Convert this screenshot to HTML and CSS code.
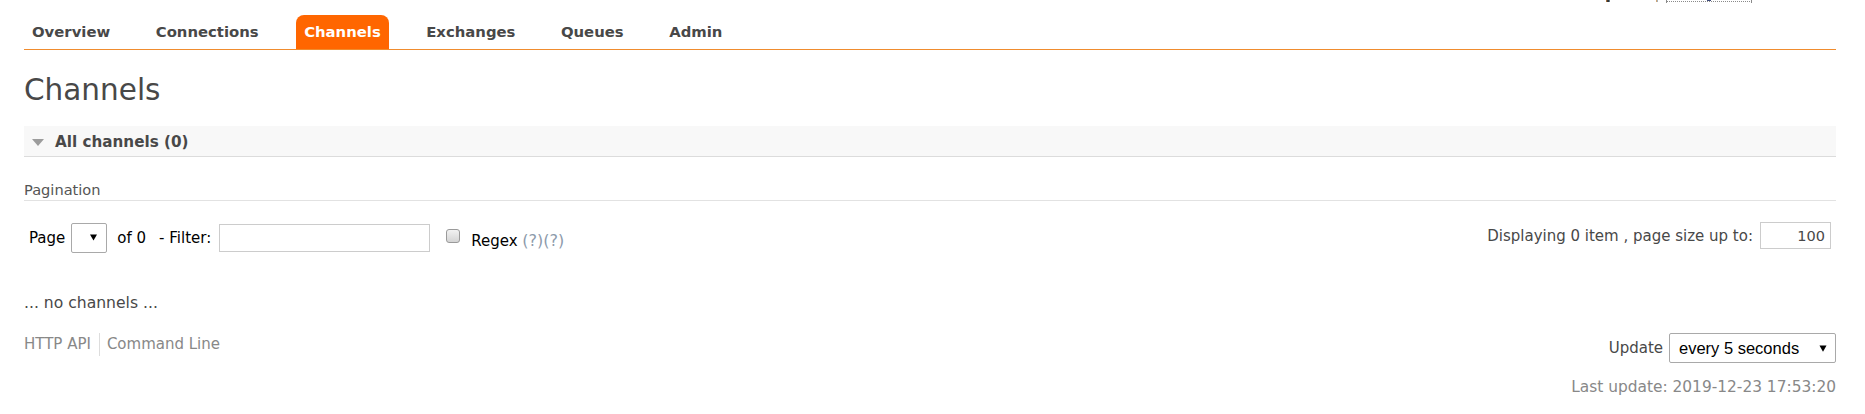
FILE: index.html
```html
<!DOCTYPE html>
<html lang="en">
<head>
<meta charset="utf-8">
<title>RabbitMQ Management - Channels</title>
<link rel="stylesheet" href="styles.css">
</head>
<body>
<div class="page">
  <div class="topcut">
    <span class="cut-a"></span>
    <span class="cut-b"></span>
    <span class="cut-box"><span class="cut-c"></span></span>
  </div>

  <ul class="tabs">
    <li><a href="#">Overview</a></li>
    <li><a href="#">Connections</a></li>
    <li><a href="#" class="active">Channels</a></li>
    <li><a href="#">Exchanges</a></li>
    <li><a href="#">Queues</a></li>
    <li><a href="#">Admin</a></li>
  </ul>

  <h1 class="title">Channels</h1>

  <div class="section">
    <h2 class="section-head"><span class="tri"></span>All channels (0)</h2>
    <div class="section-body">
      <h3 class="subhead">Pagination</h3>
      <div class="pager">
        <div class="pager-left">
          <span class="lbl">Page</span>
          <span class="select-wrap pg-wrap">
            <select class="pg-select"><option></option></select>
            <svg class="arrow pg-arrow" width="7" height="7" viewBox="0 0 7 7"><path d="M0 0.5H7L3.5 6.5Z" fill="#000"/></svg>
          </span>
          <span class="lbl of">of 0</span>
          <span class="lbl filter-lbl">- Filter:</span>
          <input class="filter" type="text">
          <input class="check" type="checkbox">
          <span class="lbl regex">Regex <span class="help">(?)(?)</span></span>
        </div>
        <div class="pager-right">
          <span>Displaying 0 item , page size up to:</span>
          <input class="size" type="text" value="100">
        </div>
      </div>
      <p class="empty">... no channels ...</p>
    </div>
  </div>

  <div class="footer">
    <div class="links">
      <a href="#">HTTP API</a>
      <a href="#" class="sep">Command Line</a>
    </div>
    <div class="update">
      <span>Update</span>
      <span class="select-wrap up-wrap">
        <select class="up-select"><option>every 5 seconds</option></select>
        <svg class="arrow up-arrow" width="8" height="7" viewBox="0 0 8 7"><path d="M0.5 0.5H7.5L4 6.8Z" fill="#000"/></svg>
      </span>
    </div>
  </div>
  <p class="last">Last update: 2019-12-23 17:53:20</p>
</div>
</body>
</html>
```
FILE: styles.css
```css
html, body {
  margin: 0;
  padding: 0;
  background: #fff;
}
body {
  font-family: "DejaVu Sans", Verdana, sans-serif;
  font-size: 15px;
  color: #484848;
}
.page {
  padding: 0 29px 0 24px;
}

/* cut-off top row */
.topcut {
  display: flex;
  justify-content: flex-end;
  height: 2px;
  margin-right: 84px;
}
.cut-a {
  width: 4px;
  height: 2px;
  background: linear-gradient(90deg, #d88a3a, #333 40%, #333 70%, #7fb0d8);
  margin-right: 46px;
}
.cut-b {
  width: 2px;
  height: 2px;
  background: linear-gradient(90deg, #e9a050, #8cb5dd);
  margin-right: 8px;
}
.cut-box {
  box-sizing: border-box;
  width: 86px;
  height: 2px;
  border: 1px dotted #8a8a8a;
  border-top: none;
  display: flex;
  justify-content: center;
}
.cut-c {
  width: 4px;
  height: 1px;
  background: #3d4a7a;
}

/* tabs */
.tabs {
  list-style: none;
  margin: 13px 0 0;
  padding: 0;
  display: flex;
  border-bottom: 1px solid #f08c2e;
}
.tabs li {
  margin-right: 29.5px;
}
.tabs a {
  display: block;
  padding: 0 8px;
  line-height: 34px;
  font-size: 14.85px;
  font-weight: bold;
  color: #484848;
  text-decoration: none;
}
.tabs a.active {
  background: #ff6600;
  color: #fff;
  border-radius: 8px 8px 0 0;
}

/* title */
.title {
  margin: 22px 0 0;
  font-size: 29.5px;
  font-weight: normal;
  line-height: 36px;
  color: #484848;
}

/* section */
.section-head {
  margin: 18px 0 0;
  padding: 2px 0 0 8px;
  display: flex;
  align-items: center;
  background: #f8f8f8;
  border-bottom: 1px solid #dcdcdc;
  line-height: 28px;
  font-size: 15.2px;
  font-weight: bold;
  color: #484848;
}
.tri {
  width: 0;
  height: 0;
  border-left: 6px solid transparent;
  border-right: 6px solid transparent;
  border-top: 7px solid #9c9c9c;
  margin-right: 11px;
}
.subhead {
  margin: 23px 0 0;
  font-size: 14.6px;
  font-weight: normal;
  line-height: 20px;
  color: #555;
  border-bottom: 1px solid #e2e2e2;
}

/* pager */
.pager {
  margin-top: 22px;
  display: flex;
  justify-content: space-between;
  align-items: flex-start;
}
.pager-left {
  display: flex;
  align-items: center;
  height: 30px;
  padding-left: 5px;
  font-size: 15px;
  color: #000;
}
.select-wrap {
  position: relative;
  display: block;
}
.arrow {
  position: absolute;
  display: block;
}
.pg-wrap {
  margin-left: 6px;
}
.pg-select {
  -webkit-appearance: none;
  appearance: none;
  display: block;
  box-sizing: border-box;
  width: 36px;
  height: 30px;
  margin: 0;
  border: 1px solid #a9a9a9;
  border-radius: 2px;
  background: #fff;
}
.pg-arrow {
  left: 19px;
  top: 11px;
}
.of {
  margin-left: 10px;
}
.filter-lbl {
  margin-left: 13px;
}
.filter {
  box-sizing: border-box;
  width: 211px;
  height: 28px;
  margin: 0 0 0 8px;
  border: 1px solid #cccccc;
  border-radius: 0;
  padding: 0 4px;
  outline: none;
}
.check {
  -webkit-appearance: none;
  appearance: none;
  box-sizing: border-box;
  width: 14px;
  height: 14px;
  margin: 0 0 4px 16px;
  border: 1px solid #9a9a9a;
  border-radius: 3px;
  background: linear-gradient(#f2f2f2, #d4d4d4);
}
.regex {
  margin: 4px 0 0 11px;
}
.help {
  color: #8d9aab;
  font-size: 16px;
}
.pager-right {
  display: flex;
  align-items: center;
  margin: -1px 5px 0 0;
  font-size: 15px;
  color: #484848;
}
.size {
  box-sizing: border-box;
  width: 71px;
  height: 27px;
  margin: 0 0 0 7px;
  border: 1px solid #cccccc;
  border-radius: 0;
  padding: 0 5px 0 0;
  text-align: right;
  font-family: "DejaVu Sans", Verdana, sans-serif;
  font-size: 14.5px;
  color: #484848;
  outline: none;
}

.empty {
  margin: 40px 0 0;
  line-height: 20px;
  font-size: 15.6px;
  color: #484848;
}

/* footer */
.footer {
  margin-top: 20px;
  display: flex;
  justify-content: space-between;
  align-items: flex-start;
}
.links {
  display: flex;
  height: 23px;
  line-height: 23px;
}
.links a {
  color: #888;
  text-decoration: none;
  font-size: 15px;
}
.links a.sep {
  border-left: 1px solid #dddddd;
  padding-left: 7px;
  margin-left: 8px;
}
.update {
  display: flex;
  align-items: center;
  font-size: 15px;
  color: #484848;
}
.up-wrap {
  margin-left: 6px;
}
.up-select {
  -webkit-appearance: none;
  appearance: none;
  display: block;
  box-sizing: border-box;
  width: 167px;
  height: 30px;
  margin: 0;
  padding: 0 0 0 9px;
  border: 1px solid #a9a9a9;
  border-radius: 2px;
  background: #fff;
  font-family: "Liberation Sans", Arial, sans-serif;
  font-size: 16.5px;
  color: #000;
}
.up-arrow {
  right: 9px;
  top: 12px;
}
.last {
  margin: 14px 0 0;
  text-align: right;
  line-height: 20px;
  font-size: 15.4px;
  color: #888;
}
```
